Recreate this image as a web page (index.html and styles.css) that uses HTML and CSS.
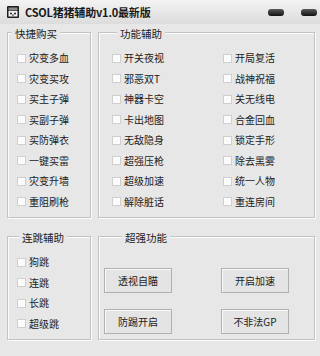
FILE: index.html
```html
<!DOCTYPE html>
<html lang="zh-CN">
<head>
<meta charset="utf-8">
<title>CSOL猪猪辅助v1.0最新版</title>
<link rel="stylesheet" href="styles.css">
</head>
<body>
<div class="window">
  <div class="titlebar">
    <svg class="app-icon" width="12" height="12" viewBox="0 0 12 12">
      <rect x="0" y="0" width="12" height="12" rx="1" fill="#1e1e1e"/>
      <rect x="1.5" y="1.5" width="9" height="3" fill="#8a8a8a"/>
      <rect x="1.5" y="5" width="9" height="5.5" fill="#f2f2f2"/>
      <circle cx="4" cy="7.5" r="1" fill="#1e1e1e"/>
      <circle cx="8" cy="7.5" r="1" fill="#1e1e1e"/>
      <rect x="5" y="8.5" width="2" height="1.2" fill="#555"/>
    </svg>
    <span class="title">CSOL猪猪辅助v1.0最新版</span>
    <div class="winbtns">
      <span class="winbtn"></span>
      <span class="winbtn"></span>
    </div>
  </div>

  <div class="panel">
    <fieldset class="group group-buy">
      <legend>快捷购买</legend>
      <div class="list">
        <label class="item"><span class="box"></span>灾变多血</label>
        <label class="item"><span class="box"></span>灾变买攻</label>
        <label class="item"><span class="box"></span>买主子弹</label>
        <label class="item"><span class="box"></span>买副子弹</label>
        <label class="item"><span class="box"></span>买防弹衣</label>
        <label class="item"><span class="box"></span>一键买雷</label>
        <label class="item"><span class="box"></span>灾变升墙</label>
        <label class="item"><span class="box"></span>重阻刷枪</label>
      </div>
    </fieldset>

    <fieldset class="group group-func">
      <legend>功能辅助</legend>
      <div class="list two-col">
        <label class="item"><span class="box"></span>开关夜视</label>
        <label class="item"><span class="box"></span>邪恶双T</label>
        <label class="item"><span class="box"></span>神器卡空</label>
        <label class="item"><span class="box"></span>卡出地图</label>
        <label class="item"><span class="box"></span>无敌隐身</label>
        <label class="item"><span class="box"></span>超强压枪</label>
        <label class="item"><span class="box"></span>超级加速</label>
        <label class="item"><span class="box"></span>解除脏话</label>
        <label class="item"><span class="box"></span>开局复活</label>
        <label class="item"><span class="box"></span>战神祝福</label>
        <label class="item"><span class="box"></span>关无线电</label>
        <label class="item"><span class="box"></span>合金回血</label>
        <label class="item"><span class="box"></span>锁定手形</label>
        <label class="item"><span class="box"></span>除去黑雾</label>
        <label class="item"><span class="box"></span>统一人物</label>
        <label class="item"><span class="box"></span>重连房间</label>
      </div>
    </fieldset>

    <fieldset class="group group-jump">
      <legend>连跳辅助</legend>
      <div class="list">
        <label class="item"><span class="box"></span>狗跳</label>
        <label class="item"><span class="box"></span>连跳</label>
        <label class="item"><span class="box"></span>长跳</label>
        <label class="item"><span class="box"></span>超级跳</label>
      </div>
    </fieldset>

    <fieldset class="group group-super">
      <legend>超强功能</legend>
      <div class="buttons">
        <button class="btn">透视自瞄</button>
        <button class="btn">开启加速</button>
        <button class="btn">防踢开启</button>
        <button class="btn">不非法GP</button>
      </div>
    </fieldset>
  </div>
</div>
</body>
</html>
```

FILE: styles.css
```css
html, body {
  margin: 0;
  padding: 0;
}
body {
  width: 320px;
  height: 356px;
  background: #e7e7e7;
  font-family: "Noto Sans CJK SC", "Noto Sans", sans-serif;
  color: #222;
  overflow: hidden;
}
.window {
  width: 320px;
  height: 356px;
  background: #e7e7e7;
}
.titlebar {
  height: 24px;
  display: flex;
  align-items: center;
  padding-left: 7px;
  box-sizing: border-box;
  background: linear-gradient(#f3f3f3, #dcdcdc);
}
.app-icon {
  display: block;
  margin-right: 6px;
}
.title {
  font-size: 11px;
  font-weight: bold;
  color: #1a1a1a;
  line-height: 12px;
  letter-spacing: -0.2px;
}
.winbtns {
  margin-left: auto;
  display: flex;
  gap: 17px;
  padding-right: 3px;
}
.winbtn {
  display: block;
  width: 16px;
  height: 7px;
  border-radius: 3px;
  background: linear-gradient(#5a5a5a, #111);
}
.panel {
  display: grid;
  grid-template-columns: 84px 217px;
  grid-template-rows: 194px 112px;
  column-gap: 7px;
  row-gap: 10px;
  padding-left: 7px;
}
.group {
  margin: 0;
  min-width: 0;
  border: 1px solid #c3c3c3;
  box-shadow: inset 1px 1px 0 #fbfbfb, 1px 1px 0 #fbfbfb;
  padding: 8px 0 0 9px;
}
.group legend {
  padding: 4px 3px 0;
  line-height: 12px;
  font-size: 10.5px;
  color: #222;
  background: #e7e7e7;
}
.group-buy legend { margin-left: -5px; }
.group-func { padding-left: 13px; }
.group-func legend { margin-left: 5px; }
.group-jump legend { margin-left: 2px; }
.group-super { padding-left: 5px; padding-top: 24px; }
.group-super legend { margin-left: 18px; }

.list {
  display: grid;
  grid-auto-rows: 20.5px;
}
.list.two-col {
  grid-template-columns: 111px 1fr;
  grid-template-rows: repeat(8, 20.5px);
  grid-auto-flow: column;
}
.item {
  display: flex;
  align-items: center;
  gap: 3px;
  font-size: 10px;
  line-height: 12px;
  color: #222;
}
.box {
  display: block;
  width: 7px;
  height: 7px;
  border: 1px solid #cfcfcf;
  background: #fbfbfb;
  flex: none;
}
.buttons {
  display: grid;
  grid-template-columns: 68px 68px;
  grid-template-rows: 25px 25px;
  column-gap: 49px;
  row-gap: 16px;
}
.btn {
  margin: 0;
  padding: 0;
  font-family: inherit;
  font-size: 10px;
  line-height: 12px;
  color: #222;
  background: #e4e4e4;
  border: 1px solid #b0b0b0;
  box-shadow: inset 1px 1px 0 #fafafa;
  border-radius: 0;
}
```
